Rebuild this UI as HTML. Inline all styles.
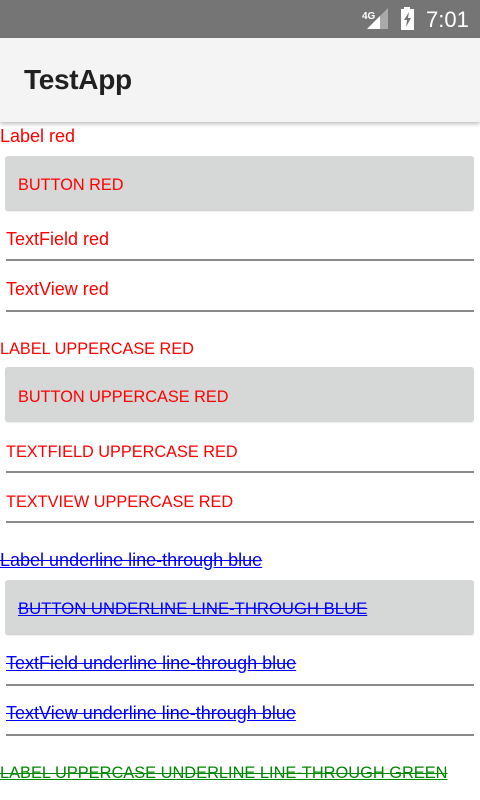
<!DOCTYPE html>
<html><head><meta charset="utf-8"><style>
body{margin:0;width:480px;height:800px;background:#fff;position:relative;overflow:hidden;font-family:"Liberation Sans",sans-serif;font-size:16.3px}
.a{position:absolute;white-space:nowrap;line-height:20px}
.l{font-size:18px}
.r{color:#f00}.b{color:#00f;text-decoration:underline line-through}.g{color:#080;text-decoration:underline line-through}
.btn{position:absolute;left:5px;width:469px;height:55px;background:#d6d7d7;border-radius:3px;box-shadow:0 1px 1px rgba(0,0,0,.08)}
.ln{position:absolute;left:6px;width:468px;height:2px;background:#8a8a8a}
</style></head><body>
<div style="position:absolute;left:0;top:0;width:480px;height:38px;background:#757575"></div>
<div class="a" style="left:362px;top:7px;color:#fff;font-size:10px;font-weight:bold">4G</div>
<svg style="position:absolute;left:366px;top:8px" width="22" height="22"><polygon points="22,0 22,21 1,21" fill="#aaa"/><polygon points="14,8 14,21 1,21" fill="#fff"/></svg>
<svg style="position:absolute;left:400px;top:7px" width="16" height="24"><rect x="4" y="0" width="6" height="3" fill="#fff"/><rect x="1" y="2" width="13" height="21" fill="#fff"/><path d="M9 5 L4 13 H7 L6 20 L11 11 H8 Z" fill="#757575"/></svg>
<div class="a" style="left:426px;top:8px;color:#fff;font-size:22px;line-height:24px">7:01</div>
<div style="position:absolute;left:0;top:38px;width:480px;height:84px;background:#f4f4f4;box-shadow:0 2px 4px rgba(0,0,0,.25)"></div>
<div class="a" style="left:24px;top:63px;font-size:28px;line-height:34px;color:#212121;font-weight:bold;letter-spacing:-0.3px">TestApp</div>

<div class="a r l" style="left:0;top:126px">Label red</div>
<div class="btn" style="top:156px"></div>
<div class="a r" style="left:18px;top:175px">BUTTON RED</div>
<div class="a r l" style="left:6px;top:229px">TextField red</div>
<div class="ln" style="top:259px"></div>
<div class="a r l" style="left:6px;top:279px">TextView red</div>
<div class="ln" style="top:310px"></div>

<div class="a r" style="left:0;top:339px">LABEL UPPERCASE RED</div>
<div class="btn" style="top:367px"></div>
<div class="a r" style="left:18px;top:387px">BUTTON UPPERCASE RED</div>
<div class="a r" style="left:6px;top:442px">TEXTFIELD UPPERCASE RED</div>
<div class="ln" style="top:471px"></div>
<div class="a r" style="left:6px;top:492px">TEXTVIEW UPPERCASE RED</div>
<div class="ln" style="top:521px"></div>

<div class="a b l" style="left:0;top:550px">Label underline line-through blue</div>
<div class="btn" style="top:580px"></div>
<div class="a b" style="left:18px;top:599px;font-size:16.7px">BUTTON UNDERLINE LINE-THROUGH BLUE</div>
<div class="a b l" style="left:6px;top:653px">TextField underline line-through blue</div>
<div class="ln" style="top:684px"></div>
<div class="a b l" style="left:6px;top:703px">TextView underline line-through blue</div>
<div class="ln" style="top:734px"></div>
<div class="a g" style="left:0;top:763px;font-size:16.4px">LABEL UPPERCASE UNDERLINE LINE-THROUGH GREEN</div>
</body></html>
